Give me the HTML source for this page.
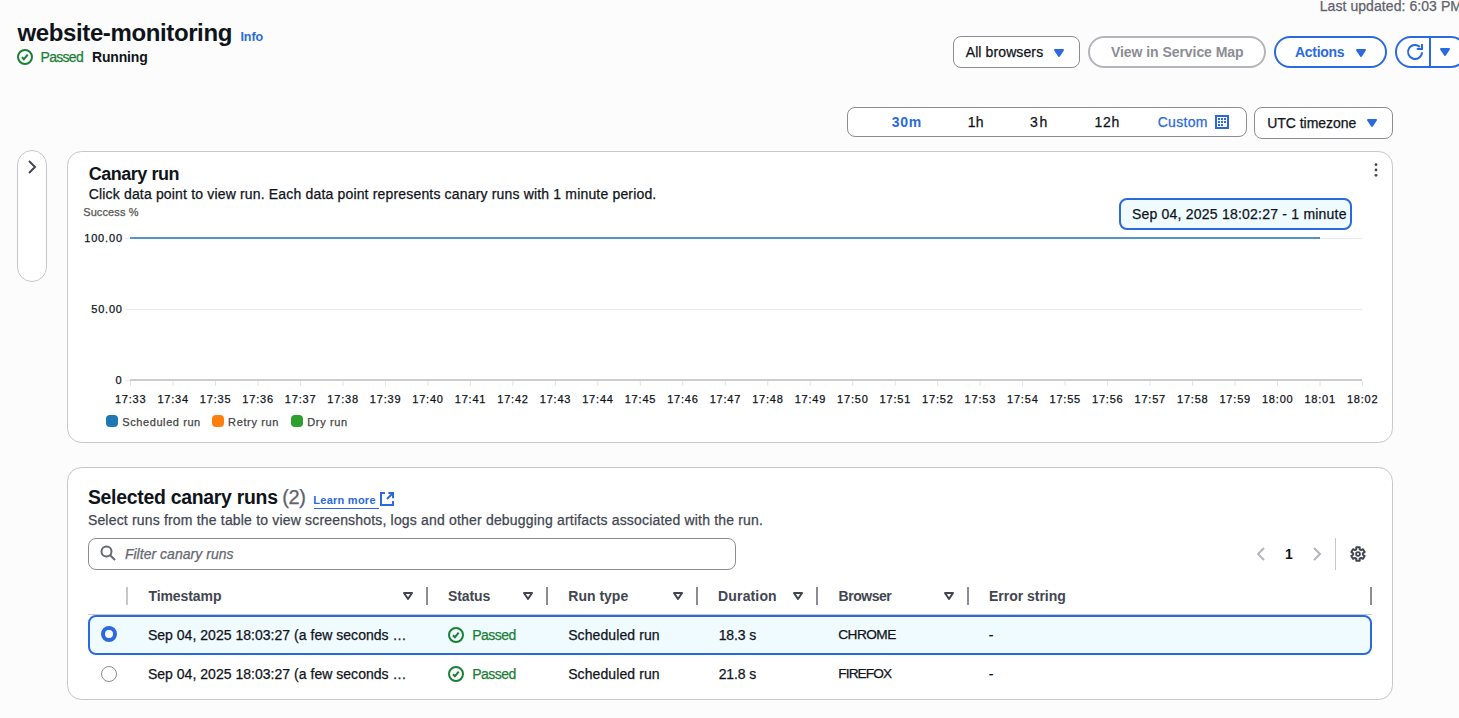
<!DOCTYPE html>
<html lang="en"><head><meta charset="utf-8"><title>website-monitoring</title>
<style>
html,body{margin:0;padding:0}
body{width:1459px;height:718px;overflow:hidden;position:relative;background:#fcfcfd;font-family:"Liberation Sans",sans-serif;color:#0f141a}
.t{position:absolute;white-space:pre;line-height:20px;font-family:"Liberation Sans",sans-serif}
.b{position:absolute;box-sizing:border-box}
svg{position:absolute;overflow:visible}
.card{background:#fff;border:1px solid #c6c6cd;border-radius:14.5px}
.sel{background:#fff;border:1px solid #8c8c94;border-radius:8px}
.pill{border-radius:20px;border:2px solid #2a6ade;background:#fff}
.hd{width:2px;height:18px;top:587px;background:#8c8c94}

</style></head>
<body>
<!-- header controls -->
<div class="b sel" style="left:953px;top:36px;width:127px;height:32px"></div>
<svg style="left:1051px;top:44.5px" width="16" height="16" viewBox="0 0 16 16"><path d="M4 5h8l-4 6z" fill="#2a6ade" stroke="#2a6ade" stroke-width="2" stroke-linejoin="round"/></svg>
<div class="b pill" style="left:1088px;top:36px;width:178px;height:32px;border-color:#b4b4bb"></div>
<div class="b pill" style="left:1274px;top:36px;width:113px;height:32px"></div>
<svg style="left:1353px;top:44.5px" width="16" height="16" viewBox="0 0 16 16"><path d="M4 5h8l-4 6z" fill="#2a6ade" stroke="#2a6ade" stroke-width="2" stroke-linejoin="round"/></svg>
<div class="b pill" style="left:1395px;top:36px;width:72px;height:32px"></div>
<div class="b" style="left:1429px;top:36px;width:2px;height:32px;background:#2a6ade"></div>
<svg style="left:1407px;top:44px" width="16" height="16" viewBox="0 0 16 16" fill="none" stroke="#2a6ade" stroke-width="2"><path d="M15 8.2a7 7 0 1 1-2.2-5.3" /><path d="M9.8 5H15V0"/></svg>
<svg style="left:1437px;top:44.2px" width="16" height="16" viewBox="0 0 16 16"><path d="M4 5h8l-4 6z" fill="#2a6ade" stroke="#2a6ade" stroke-width="2" stroke-linejoin="round"/></svg>
<!-- status icon -->
<svg style="left:17px;top:49px" width="16" height="16" viewBox="0 0 16 16" fill="none" stroke="#1a7f37" stroke-width="2"><circle cx="8" cy="8" r="7"/><path d="M4.9 8.2L6.9 10.2L10.7 5.7"/></svg>
<!-- time range -->
<div class="b sel" style="left:847px;top:107px;width:400px;height:30px"></div>
<svg style="left:1215px;top:115px" width="14" height="14" viewBox="0 0 14 14"><rect x="1" y="1" width="12" height="12" fill="none" stroke="#2a6ade" stroke-width="2"/><g fill="#2a6ade"><rect x="3" y="3" width="2" height="2"/><rect x="6" y="3" width="2" height="2"/><rect x="9" y="3" width="2" height="2"/><rect x="3" y="6" width="2" height="2"/><rect x="6" y="6" width="2" height="2"/><rect x="9" y="6" width="2" height="2"/><rect x="3" y="9" width="2" height="2"/><rect x="6" y="9" width="2" height="2"/></g></svg>
<div class="b sel" style="left:1254px;top:107px;width:139px;height:32px"></div>
<svg style="left:1364px;top:114.8px" width="16" height="16" viewBox="0 0 16 16"><path d="M4 5h8l-4 6z" fill="#2a6ade" stroke="#2a6ade" stroke-width="2" stroke-linejoin="round"/></svg>
<!-- side toggle -->
<div class="b" style="left:17px;top:150px;width:30px;height:132px;border:1px solid #c6c6cd;border-radius:15px;background:#fff"></div>
<svg style="left:24px;top:159px" width="16" height="16" viewBox="0 0 16 16" fill="none" stroke="#424650" stroke-width="2"><path d="M5 2l6 6-6 6"/></svg>
<!-- card 1 -->
<div class="b card" style="left:67px;top:151px;width:1326px;height:292px"></div>
<svg style="left:1368px;top:162px" width="16" height="16" viewBox="0 0 16 16" fill="#424650"><circle cx="8" cy="2.7" r="1.4"/><circle cx="8" cy="8" r="1.4"/><circle cx="8" cy="13.3" r="1.4"/></svg>
<!-- chart -->
<div class="b" style="left:125px;top:237.5px;width:1237px;height:1px;background:#ebebee"></div>
<div class="b" style="left:125px;top:309px;width:1237px;height:1px;background:#ebebee"></div>
<div class="b" style="left:125px;top:380px;width:6px;height:1px;background:#ebebee"></div>
<div class="b" style="left:130px;top:379px;width:1232px;height:2px;background:#ccc"></div>
<div class="b" style="left:130px;top:236.6px;width:1190px;height:2px;background:#5295c6"></div>
<div class="b" style="left:1318.6px;top:236.6px;width:1.4px;height:2px;background:#4489c0"></div>
<svg style="left:0;top:0" width="1459" height="718" id="ticks"><path stroke="#e2e2e6" stroke-width="1" d="M130.50 381V386 M172.98 381V386 M215.47 381V386 M257.95 381V386 M300.43 381V386 M342.91 381V386 M385.40 381V386 M427.88 381V386 M470.36 381V386 M512.85 381V386 M555.33 381V386 M597.81 381V386 M640.30 381V386 M682.78 381V386 M725.26 381V386 M767.75 381V386 M810.23 381V386 M852.71 381V386 M895.19 381V386 M937.68 381V386 M980.16 381V386 M1022.64 381V386 M1065.13 381V386 M1107.61 381V386 M1150.09 381V386 M1192.57 381V386 M1235.06 381V386 M1277.54 381V386 M1320.02 381V386 M1362.51 381V386"/></svg>
<div class="b" style="left:106px;top:415px;width:12px;height:12px;border-radius:4px;background:#1f77b4"></div>
<div class="b" style="left:212px;top:415px;width:12px;height:12px;border-radius:4px;background:#ff7f0e"></div>
<div class="b" style="left:291px;top:415px;width:12px;height:12px;border-radius:4px;background:#2ca02c"></div>
<div class="b" style="left:1119px;top:198px;width:233px;height:32px;border:2px solid #2a6ade;border-radius:8px;background:#f0fbff"></div>
<!-- card 2 -->
<div class="b card" style="left:67px;top:467px;width:1326px;height:233px"></div>
<div class="b" style="left:314px;top:508px;width:65px;height:1px;background:#2a6ade"></div>
<svg style="left:378.7px;top:491px" width="16" height="16" viewBox="0 0 16 16" fill="none" stroke="#2a6ade" stroke-width="2"><path d="M14 10V14H2V2h4"/><path d="M9.4 2H14V7.2"/><path d="M14 2L8 8"/></svg>
<div class="b sel" style="left:88px;top:538px;width:648px;height:32px"></div>
<svg style="left:100.4px;top:545.3px" width="16" height="16" viewBox="0 0 16 16" fill="none" stroke="#656871" stroke-width="2"><circle cx="6.5" cy="6.5" r="5"/><path d="M10.2 10.2L15 15"/></svg>
<svg style="left:1253px;top:546px" width="16" height="16" viewBox="0 0 16 16" fill="none" stroke="#b4b4bb" stroke-width="2"><path d="M11 2L5 8l6 6"/></svg>
<svg style="left:1308.5px;top:546px" width="16" height="16" viewBox="0 0 16 16" fill="none" stroke="#b4b4bb" stroke-width="2"><path d="M5 2l6 6-6 6"/></svg>
<div class="b" style="left:1335px;top:538px;width:1px;height:32px;background:#c6c6cd"></div>
<svg style="left:1350px;top:545.8px" width="16" height="16" viewBox="0 0 16 16" fill="none" stroke="#424650" stroke-width="2" stroke-linejoin="round"><path d="M9.76 3.43 L9.67 1.30 L6.33 1.30 L6.24 3.43 L4.92 4.19 L3.04 3.21 L1.37 6.10 L3.16 7.23 L3.16 8.77 L1.37 9.90 L3.04 12.79 L4.92 11.81 L6.24 12.57 L6.33 14.70 L9.67 14.70 L9.76 12.57 L11.08 11.81 L12.96 12.79 L14.63 9.90 L12.84 8.77 L12.84 7.23 L14.63 6.10 L12.96 3.21 L11.08 4.19Z"/><circle cx="8" cy="8" r="1.9" stroke-width="1.8"/></svg>
<!-- table header -->
<div class="b hd" style="left:126px;background:#c6c6cd"></div>
<div class="b hd" style="left:426px"></div>
<div class="b hd" style="left:546px"></div>
<div class="b hd" style="left:696px"></div>
<div class="b hd" style="left:816px"></div>
<div class="b hd" style="left:967px"></div>
<div class="b hd" style="left:1370px"></div>
<div class="b" style="left:88px;top:614px;width:1284px;height:1px;background:#c6c6cd"></div>
<svg style="left:400px;top:588px" width="16" height="16" viewBox="0 0 16 16"><path d="M4 5h8l-4 6z" fill="none" stroke="#424650" stroke-width="2" stroke-linejoin="round"/></svg>
<svg style="left:520px;top:588px" width="16" height="16" viewBox="0 0 16 16"><path d="M4 5h8l-4 6z" fill="none" stroke="#424650" stroke-width="2" stroke-linejoin="round"/></svg>
<svg style="left:670px;top:588px" width="16" height="16" viewBox="0 0 16 16"><path d="M4 5h8l-4 6z" fill="none" stroke="#424650" stroke-width="2" stroke-linejoin="round"/></svg>
<svg style="left:790px;top:588px" width="16" height="16" viewBox="0 0 16 16"><path d="M4 5h8l-4 6z" fill="none" stroke="#424650" stroke-width="2" stroke-linejoin="round"/></svg>
<svg style="left:941px;top:588px" width="16" height="16" viewBox="0 0 16 16"><path d="M4 5h8l-4 6z" fill="none" stroke="#424650" stroke-width="2" stroke-linejoin="round"/></svg>

<!-- rows -->
<div class="b" style="left:88px;top:615px;width:1284px;height:40px;border:2px solid #2a6ade;border-radius:8px;background:#f0fbff"></div>
<div class="b" style="left:101px;top:626px;width:16px;height:16px;border-radius:50%;border:4.7px solid #2a6ade;background:#fff"></div>
<div class="b" style="left:101px;top:666px;width:16px;height:16px;border-radius:50%;border:1px solid #8c8c94;background:#fff"></div>
<svg style="left:448px;top:627px" width="16" height="16" viewBox="0 0 16 16" fill="none" stroke="#1a7f37" stroke-width="2"><circle cx="8" cy="8" r="7"/><path d="M4.9 8.2L6.9 10.2L10.7 5.7"/></svg>
<svg style="left:448px;top:666px" width="16" height="16" viewBox="0 0 16 16" fill="none" stroke="#1a7f37" stroke-width="2"><circle cx="8" cy="8" r="7"/><path d="M4.9 8.2L6.9 10.2L10.7 5.7"/></svg>

<!-- text -->
<span class="t" style="left:17.50px;top:22.68px;font-size:24px;color:#0f141a;font-weight:700;letter-spacing:-0.382px;">website-monitoring</span>
<span class="t" style="left:240.50px;top:26.67px;font-size:12.5px;color:#2a6ade;font-weight:700;letter-spacing:-0.100px;">Info</span>
<span class="t" style="left:40.50px;top:47.15px;font-size:14px;color:#1a7f37;-webkit-text-stroke:0.25px #1a7f37;letter-spacing:-0.700px;">Passed</span>
<span class="t" style="left:92.00px;top:47.15px;font-size:14px;color:#0f141a;font-weight:700;letter-spacing:-0.167px;">Running</span>
<span class="t" style="left:1319.70px;top:-3.85px;font-size:14px;color:#5f626b;-webkit-text-stroke:0.25px #5f626b;letter-spacing:0.070px;">Last updated: 6:03 PM</span>
<span class="t" style="left:965.70px;top:41.85px;font-size:14px;color:#0f141a;-webkit-text-stroke:0.25px #0f141a;letter-spacing:0.109px;">All browsers</span>
<span class="t" style="left:1111.00px;top:41.85px;font-size:14px;color:#8c8c94;font-weight:700;letter-spacing:-0.056px;">View in Service Map</span>
<span class="t" style="left:1295.10px;top:41.85px;font-size:14px;color:#2a6ade;font-weight:700;letter-spacing:-0.333px;">Actions</span>
<span class="t" style="left:891.70px;top:112.15px;font-size:14px;color:#2a6ade;font-weight:700;letter-spacing:0.750px;">30m</span>
<span class="t" style="left:967.70px;top:112.15px;font-size:14px;color:#0f141a;-webkit-text-stroke:0.25px #0f141a;letter-spacing:0.300px;">1h</span>
<span class="t" style="left:1030.00px;top:112.15px;font-size:14px;color:#0f141a;-webkit-text-stroke:0.25px #0f141a;letter-spacing:1.800px;">3h</span>
<span class="t" style="left:1094.60px;top:112.15px;font-size:14px;color:#0f141a;-webkit-text-stroke:0.25px #0f141a;letter-spacing:0.650px;">12h</span>
<span class="t" style="left:1157.70px;top:112.15px;font-size:14px;color:#2a6ade;-webkit-text-stroke:0.25px #2a6ade;letter-spacing:0.320px;">Custom</span>
<span class="t" style="left:1267.20px;top:112.95px;font-size:14px;color:#0f141a;-webkit-text-stroke:0.25px #0f141a;letter-spacing:-0.027px;">UTC timezone</span>
<span class="t" style="left:88.70px;top:163.86px;font-size:18px;color:#0f141a;font-weight:700;letter-spacing:-0.467px;">Canary run</span>
<span class="t" style="left:88.70px;top:184.35px;font-size:14px;color:#0f141a;-webkit-text-stroke:0.25px #0f141a;letter-spacing:0.169px;">Click data point to view run. Each data point represents canary runs with 1 minute period.</span>
<span class="t" style="left:83.20px;top:202.39px;font-size:11px;color:#555;-webkit-text-stroke:0.25px #555;letter-spacing:0.112px;">Success %</span>
<span class="t" style="left:84.20px;top:228.19px;font-size:11px;color:#0f141a;-webkit-text-stroke:0.25px #0f141a;letter-spacing:0.840px;">100.00</span>
<span class="t" style="left:91.30px;top:299.19px;font-size:11px;color:#0f141a;-webkit-text-stroke:0.25px #0f141a;letter-spacing:0.775px;">50.00</span>
<span class="t" style="left:115.60px;top:370.19px;font-size:11px;color:#0f141a;-webkit-text-stroke:0.25px #0f141a;">0</span>
<span class="t" style="left:114.90px;top:389.19px;font-size:11px;color:#0f141a;-webkit-text-stroke:0.25px #0f141a;letter-spacing:0.800px;">17:33</span>
<span class="t" style="left:157.38px;top:389.19px;font-size:11px;color:#0f141a;-webkit-text-stroke:0.25px #0f141a;letter-spacing:0.800px;">17:34</span>
<span class="t" style="left:199.87px;top:389.19px;font-size:11px;color:#0f141a;-webkit-text-stroke:0.25px #0f141a;letter-spacing:0.800px;">17:35</span>
<span class="t" style="left:242.35px;top:389.19px;font-size:11px;color:#0f141a;-webkit-text-stroke:0.25px #0f141a;letter-spacing:0.800px;">17:36</span>
<span class="t" style="left:284.83px;top:389.19px;font-size:11px;color:#0f141a;-webkit-text-stroke:0.25px #0f141a;letter-spacing:0.800px;">17:37</span>
<span class="t" style="left:327.31px;top:389.19px;font-size:11px;color:#0f141a;-webkit-text-stroke:0.25px #0f141a;letter-spacing:0.800px;">17:38</span>
<span class="t" style="left:369.80px;top:389.19px;font-size:11px;color:#0f141a;-webkit-text-stroke:0.25px #0f141a;letter-spacing:0.800px;">17:39</span>
<span class="t" style="left:412.28px;top:389.19px;font-size:11px;color:#0f141a;-webkit-text-stroke:0.25px #0f141a;letter-spacing:0.800px;">17:40</span>
<span class="t" style="left:454.76px;top:389.19px;font-size:11px;color:#0f141a;-webkit-text-stroke:0.25px #0f141a;letter-spacing:0.800px;">17:41</span>
<span class="t" style="left:497.25px;top:389.19px;font-size:11px;color:#0f141a;-webkit-text-stroke:0.25px #0f141a;letter-spacing:0.800px;">17:42</span>
<span class="t" style="left:539.73px;top:389.19px;font-size:11px;color:#0f141a;-webkit-text-stroke:0.25px #0f141a;letter-spacing:0.800px;">17:43</span>
<span class="t" style="left:582.21px;top:389.19px;font-size:11px;color:#0f141a;-webkit-text-stroke:0.25px #0f141a;letter-spacing:0.800px;">17:44</span>
<span class="t" style="left:624.70px;top:389.19px;font-size:11px;color:#0f141a;-webkit-text-stroke:0.25px #0f141a;letter-spacing:0.800px;">17:45</span>
<span class="t" style="left:667.18px;top:389.19px;font-size:11px;color:#0f141a;-webkit-text-stroke:0.25px #0f141a;letter-spacing:0.800px;">17:46</span>
<span class="t" style="left:709.66px;top:389.19px;font-size:11px;color:#0f141a;-webkit-text-stroke:0.25px #0f141a;letter-spacing:0.800px;">17:47</span>
<span class="t" style="left:752.14px;top:389.19px;font-size:11px;color:#0f141a;-webkit-text-stroke:0.25px #0f141a;letter-spacing:0.800px;">17:48</span>
<span class="t" style="left:794.63px;top:389.19px;font-size:11px;color:#0f141a;-webkit-text-stroke:0.25px #0f141a;letter-spacing:0.800px;">17:49</span>
<span class="t" style="left:837.11px;top:389.19px;font-size:11px;color:#0f141a;-webkit-text-stroke:0.25px #0f141a;letter-spacing:0.800px;">17:50</span>
<span class="t" style="left:879.59px;top:389.19px;font-size:11px;color:#0f141a;-webkit-text-stroke:0.25px #0f141a;letter-spacing:0.800px;">17:51</span>
<span class="t" style="left:922.08px;top:389.19px;font-size:11px;color:#0f141a;-webkit-text-stroke:0.25px #0f141a;letter-spacing:0.800px;">17:52</span>
<span class="t" style="left:964.56px;top:389.19px;font-size:11px;color:#0f141a;-webkit-text-stroke:0.25px #0f141a;letter-spacing:0.800px;">17:53</span>
<span class="t" style="left:1007.04px;top:389.19px;font-size:11px;color:#0f141a;-webkit-text-stroke:0.25px #0f141a;letter-spacing:0.800px;">17:54</span>
<span class="t" style="left:1049.53px;top:389.19px;font-size:11px;color:#0f141a;-webkit-text-stroke:0.25px #0f141a;letter-spacing:0.800px;">17:55</span>
<span class="t" style="left:1092.01px;top:389.19px;font-size:11px;color:#0f141a;-webkit-text-stroke:0.25px #0f141a;letter-spacing:0.800px;">17:56</span>
<span class="t" style="left:1134.49px;top:389.19px;font-size:11px;color:#0f141a;-webkit-text-stroke:0.25px #0f141a;letter-spacing:0.800px;">17:57</span>
<span class="t" style="left:1176.97px;top:389.19px;font-size:11px;color:#0f141a;-webkit-text-stroke:0.25px #0f141a;letter-spacing:0.800px;">17:58</span>
<span class="t" style="left:1219.46px;top:389.19px;font-size:11px;color:#0f141a;-webkit-text-stroke:0.25px #0f141a;letter-spacing:0.800px;">17:59</span>
<span class="t" style="left:1261.94px;top:389.19px;font-size:11px;color:#0f141a;-webkit-text-stroke:0.25px #0f141a;letter-spacing:0.800px;">18:00</span>
<span class="t" style="left:1304.42px;top:389.19px;font-size:11px;color:#0f141a;-webkit-text-stroke:0.25px #0f141a;letter-spacing:0.800px;">18:01</span>
<span class="t" style="left:1346.91px;top:389.19px;font-size:11px;color:#0f141a;-webkit-text-stroke:0.25px #0f141a;letter-spacing:0.800px;">18:02</span>
<span class="t" style="left:122.30px;top:412.09px;font-size:11px;color:#444;-webkit-text-stroke:0.25px #444;letter-spacing:0.583px;">Scheduled run</span>
<span class="t" style="left:228.10px;top:412.09px;font-size:11px;color:#444;-webkit-text-stroke:0.25px #444;letter-spacing:0.637px;">Retry run</span>
<span class="t" style="left:307.30px;top:412.09px;font-size:11px;color:#444;-webkit-text-stroke:0.25px #444;letter-spacing:0.633px;">Dry run</span>
<span class="t" style="left:1131.90px;top:204.25px;font-size:14px;color:#0f141a;-webkit-text-stroke:0.25px #0f141a;letter-spacing:0.219px;">Sep 04, 2025 18:02:27 - 1 minute</span>
<span class="t" style="left:87.90px;top:487.18px;font-size:19.4px;color:#0f141a;font-weight:700;letter-spacing:-0.263px;">Selected canary runs</span>
<span class="t" style="left:282.20px;top:486.97px;font-size:20px;color:#5f626b;-webkit-text-stroke:0.25px #5f626b;letter-spacing:-0.300px;">(2)</span>
<span class="t" style="left:313.30px;top:490.09px;font-size:11px;color:#2a6ade;font-weight:700;letter-spacing:0.256px;">Learn more</span>
<span class="t" style="left:87.90px;top:510.05px;font-size:14px;color:#424650;-webkit-text-stroke:0.25px #424650;letter-spacing:0.179px;">Select runs from the table to view screenshots, logs and other debugging artifacts associated with the run.</span>
<span class="t" style="left:124.90px;top:543.85px;font-size:14px;color:#656871;-webkit-text-stroke:0.25px #656871;font-style:italic;letter-spacing:0.029px;">Filter canary runs</span>
<span class="t" style="left:1285.10px;top:544.35px;font-size:14px;color:#0f141a;font-weight:700;">1</span>
<span class="t" style="left:148.50px;top:586.05px;font-size:14px;color:#424650;font-weight:700;letter-spacing:-0.088px;">Timestamp</span>
<span class="t" style="left:447.90px;top:586.05px;font-size:14px;color:#424650;font-weight:700;letter-spacing:-0.060px;">Status</span>
<span class="t" style="left:568.30px;top:586.05px;font-size:14px;color:#424650;font-weight:700;">Run type</span>
<span class="t" style="left:718.10px;top:586.05px;font-size:14px;color:#424650;font-weight:700;letter-spacing:0.143px;">Duration</span>
<span class="t" style="left:838.50px;top:586.05px;font-size:14px;color:#424650;font-weight:700;letter-spacing:-0.450px;">Browser</span>
<span class="t" style="left:989.00px;top:586.05px;font-size:14px;color:#424650;font-weight:700;letter-spacing:-0.018px;">Error string</span>
<span class="t" style="left:147.90px;top:624.75px;font-size:14px;color:#0f141a;-webkit-text-stroke:0.25px #0f141a;letter-spacing:0.027px;">Sep 04, 2025 18:03:27 (a few seconds …</span>
<span class="t" style="left:472.30px;top:624.75px;font-size:14px;color:#1a7f37;-webkit-text-stroke:0.25px #1a7f37;letter-spacing:-0.560px;">Passed</span>
<span class="t" style="left:568.20px;top:624.75px;font-size:14px;color:#0f141a;-webkit-text-stroke:0.25px #0f141a;letter-spacing:0.092px;">Scheduled run</span>
<span class="t" style="left:718.70px;top:624.75px;font-size:14px;color:#0f141a;-webkit-text-stroke:0.25px #0f141a;letter-spacing:-0.100px;">18.3 s</span>
<span class="t" style="left:838.30px;top:624.85px;font-size:13.7px;color:#0f141a;-webkit-text-stroke:0.25px #0f141a;letter-spacing:-0.560px;">CHROME</span>
<span class="t" style="left:988.80px;top:624.75px;font-size:14px;color:#0f141a;-webkit-text-stroke:0.25px #0f141a;">-</span>
<span class="t" style="left:147.90px;top:663.75px;font-size:14px;color:#0f141a;-webkit-text-stroke:0.25px #0f141a;letter-spacing:0.027px;">Sep 04, 2025 18:03:27 (a few seconds …</span>
<span class="t" style="left:472.30px;top:663.75px;font-size:14px;color:#1a7f37;-webkit-text-stroke:0.25px #1a7f37;letter-spacing:-0.560px;">Passed</span>
<span class="t" style="left:568.20px;top:663.75px;font-size:14px;color:#0f141a;-webkit-text-stroke:0.25px #0f141a;letter-spacing:0.092px;">Scheduled run</span>
<span class="t" style="left:718.70px;top:663.75px;font-size:14px;color:#0f141a;-webkit-text-stroke:0.25px #0f141a;letter-spacing:-0.100px;">21.8 s</span>
<span class="t" style="left:838.30px;top:663.85px;font-size:13.7px;color:#0f141a;-webkit-text-stroke:0.25px #0f141a;letter-spacing:-0.917px;">FIREFOX</span>
<span class="t" style="left:988.80px;top:663.75px;font-size:14px;color:#0f141a;-webkit-text-stroke:0.25px #0f141a;">-</span>
</body></html>
